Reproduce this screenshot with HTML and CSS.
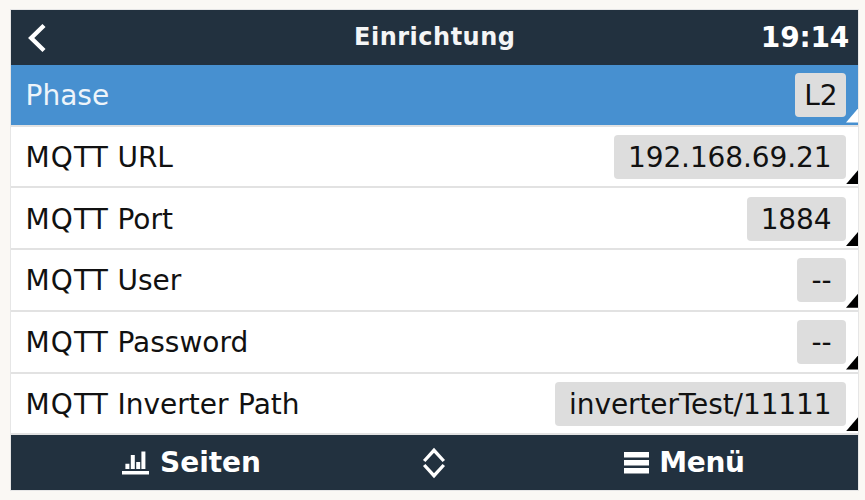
FILE: index.html
```html
<!DOCTYPE html>
<html lang="de">
<head>
<meta charset="utf-8">
<title>Einrichtung</title>
<link rel="stylesheet" href="styles.css">
</head>
<body>
<main class="screen">
  <header class="bar header">
    <svg class="back" viewBox="0 0 20 30" width="20" height="30"><path d="M17 2.500 4.200 15 17 27.500" fill="none" stroke="#fff" stroke-width="4.400"/></svg>
    <h1 class="title">Einrichtung</h1>
    <span class="clock">19:14</span>
  </header>
  <ul class="list">
    <li class="row selected"><span class="label">Phase</span><span class="value compact">L2</span></li>
    <li class="row"><span class="label"><span class="prefix">MQ</span>TT URL</span><span class="value">192.168.69.21</span></li>
    <li class="row"><span class="label"><span class="prefix">MQ</span>TT Port</span><span class="value">1884</span></li>
    <li class="row"><span class="label"><span class="prefix">MQ</span>TT User</span><span class="value">--</span></li>
    <li class="row"><span class="label"><span class="prefix">MQ</span>TT Password</span><span class="value">--</span></li>
    <li class="row"><span class="label"><span class="prefix">MQ</span>TT Inverter Path</span><span class="value">inverterTest/11111</span></li>
  </ul>
  <footer class="bar footer">
    <div class="action pages">
      <svg viewBox="0 0 27 24" width="27" height="24" fill="#fff"><path d="M0 20h27v3.600H0zM3.400 12.800h4V18h-4zM8.800 4h4v14h-4zM14.200 11h4v7h-4zM19.400.5h4V18h-4z"/></svg>
      <span>Seiten</span>
    </div>
    <svg class="scroll" viewBox="0 0 24 32" width="24" height="32"><path d="M2.200 14 12 3.300 21.800 14M2.200 18 12 28.700 21.800 18" fill="none" stroke="#fff" stroke-width="3.300"/></svg>
    <div class="action menu">
      <svg viewBox="0 0 25 22" width="25" height="22" fill="#fff"><path d="M0 0h25v5.400H0zM0 8h25v5.400H0zM0 16h25v5.400H0z"/></svg>
      <span>Menü</span>
    </div>
  </footer>
</main>
</body>
</html>
```
FILE: styles.css
```css
* { box-sizing: border-box; }
body {
  margin: 0;
  height: 500px;
  padding: 9px 6px 9px 10px;
  background: #faf8f4;
  font-family: "DejaVu Sans", sans-serif;
  font-size: 28px;
  overflow: hidden;
}
.screen {
  display: flex;
  flex-direction: column;
  width: 849px;
  height: 482px;
  border: 1px solid #e6e6e6;
  background: #fff;
}
.bar {
  background: #22313f;
  color: #fff;
  font-weight: bold;
}
.header {
  display: grid;
  grid-template-columns: 100px 1fr 100px;
  align-items: center;
  height: 54.75px;
  padding: 0 9px 0 15.5px;
}
.back { margin-top: 1px; }
.title {
  margin: 0;
  padding-right: 6px;
  color: #f4f5f6;
  font-size: 24px;
  letter-spacing: 0.5px;
  text-align: center;
}
.clock {
  letter-spacing: -0.2px;
  text-align: right;
}
.list {
  margin: 0;
  padding: 0;
  list-style: none;
}
.row {
  position: relative;
  display: flex;
  justify-content: space-between;
  align-items: center;
  height: 61.75px;
  padding: 1px 12.5px 0 14.5px;
  border-bottom: 2px solid #e2e2e2;
  color: #111;
}
.row::after {
  content: "";
  position: absolute;
  right: 0;
  bottom: 2px;
  width: 12px;
  height: 14px;
  background: #000;
  clip-path: polygon(100% 0, 100% 100%, 0 100%);
}
.selected { background: #4790d0; }
.selected .label { color: #edf4fa; }
.selected::after { background: #fff; }
.label {
  padding-top: 1px;
  word-spacing: 0.7px;
}
.prefix { letter-spacing: 1.2px; }
.value {
  height: 44px;
  padding: 0 14px;
  border-radius: 4px;
  background: #ddd;
  color: #111;
  letter-spacing: -0.1px;
  line-height: 45px;
}
.compact { padding: 0 8px 0 9.5px; }
.footer {
  display: grid;
  grid-template-columns: 361px 123px 1fr;
  align-items: center;
  flex: 1;
}
.action {
  display: flex;
  align-items: center;
  justify-content: center;
}
.pages { gap: 11px; }
.menu {
  gap: 10px;
  padding-left: 16px;
  letter-spacing: -0.3px;
}
.scroll { justify-self: center; }
```
